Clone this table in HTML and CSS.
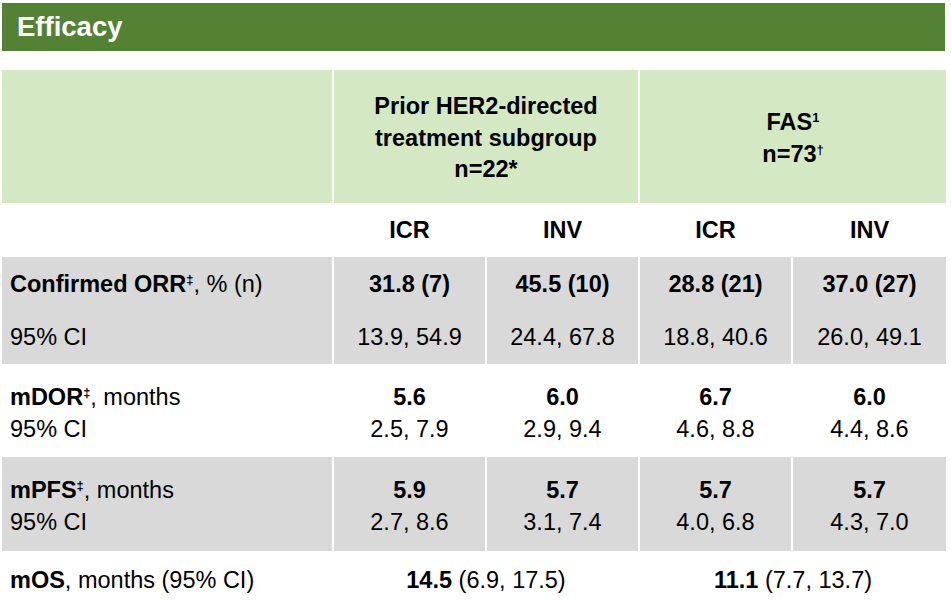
FILE: index.html
```html
<!DOCTYPE html>
<html lang="en">
<head>
<meta charset="utf-8">
<title>Efficacy</title>
<link rel="stylesheet" href="styles.css">
</head>
<body>
<div class="title">Efficacy</div>
<div class="table">
  <div class="cell hd"></div>
  <div class="cell hd center span2 bold"><div>Prior HER2-directed<br>treatment subgroup<br>n=22*</div></div>
  <div class="cell hd center span2 bold"><div>FAS<sup class="s">1</sup><br>n=73<sup class="s">†</sup></div></div>

  <div class="cell"></div>
  <div class="cell center bold">ICR</div>
  <div class="cell center bold">INV</div>
  <div class="cell center bold">ICR</div>
  <div class="cell center bold">INV</div>

  <div class="cell gray label"><span><b>Confirmed ORR<sup class="s">‡</sup></b>, % (n)</span></div>
  <div class="cell gray center bold">31.8 (7)</div>
  <div class="cell gray center bold">45.5 (10)</div>
  <div class="cell gray center bold">28.8 (21)</div>
  <div class="cell gray center bold">37.0 (27)</div>

  <div class="cell gray label">95% CI</div>
  <div class="cell gray center">13.9, 54.9</div>
  <div class="cell gray center">24.4, 67.8</div>
  <div class="cell gray center">18.8, 40.6</div>
  <div class="cell gray center">26.0, 49.1</div>

  <div class="cell two label"><span><b>mDOR<sup class="s">‡</sup></b>, months</span><span>95% CI</span></div>
  <div class="cell two center"><b>5.6</b><span>2.5, 7.9</span></div>
  <div class="cell two center"><b>6.0</b><span>2.9, 9.4</span></div>
  <div class="cell two center"><b>6.7</b><span>4.6, 8.8</span></div>
  <div class="cell two center"><b>6.0</b><span>4.4, 8.6</span></div>

  <div class="cell gray two label"><span><b>mPFS<sup class="s">‡</sup></b>, months</span><span>95% CI</span></div>
  <div class="cell gray two center"><b>5.9</b><span>2.7, 8.6</span></div>
  <div class="cell gray two center"><b>5.7</b><span>3.1, 7.4</span></div>
  <div class="cell gray two center"><b>5.7</b><span>4.0, 6.8</span></div>
  <div class="cell gray two center"><b>5.7</b><span>4.3, 7.0</span></div>

  <div class="cell label"><span><b>mOS</b>, months (95% CI)</span></div>
  <div class="cell center span2"><span><b>14.5</b> (6.9, 17.5)</span></div>
  <div class="cell center span2"><span><b>11.1</b> (7.7, 13.7)</span></div>
</div>
</body>
</html>
```

FILE: styles.css
```css
html, body {
  margin: 0;
  padding: 0;
  background: #ffffff;
}

body {
  font-family: "Liberation Sans", Arial, sans-serif;
  color: #000000;
  font-size: 23.5px;
}

.title {
  margin: 3px 0 0 2px;
  width: 928px;
  height: 48px;
  padding-left: 15px;
  background: #548235;
  color: #ffffff;
  font-weight: bold;
  font-size: 27.5px;
  display: flex;
  align-items: center;
}

.table {
  margin: 19px 0 0 2px;
  width: 944px;
  display: grid;
  grid-template-columns: 330px 151px 151px 151px 1fr;
  grid-template-rows: 133px 54px 53px 54px 93px 94px 58px;
  column-gap: 2px;
}

.cell {
  display: flex;
  flex-direction: column;
  justify-content: center;
  line-height: 32px;
}

.hd {
  background: #d5e8c4;
  line-height: 31.5px;
  padding-top: 4px;
}

.gray {
  background: #d9d9d9;
}

.center {
  align-items: center;
  text-align: center;
}

.label {
  padding-left: 8px;
}

.bold {
  font-weight: bold;
}

.span2 {
  grid-column: span 2;
}

.two {
  padding-top: 4px;
}

.s {
  font-size: 55%;
  line-height: 0;
  vertical-align: 0.65em;
}
```
